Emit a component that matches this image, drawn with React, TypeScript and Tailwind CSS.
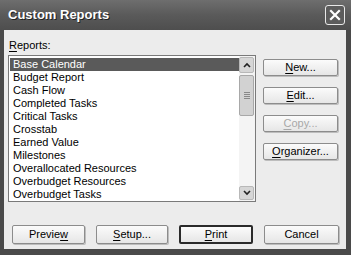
import React from 'react';

const reports = [
  'Base Calendar',
  'Budget Report',
  'Cash Flow',
  'Completed Tasks',
  'Critical Tasks',
  'Crosstab',
  'Earned Value',
  'Milestones',
  'Overallocated Resources',
  'Overbudget Resources',
  'Overbudget Tasks',
];

const Btn: React.FC<{ w: string; def?: boolean; disabled?: boolean; children: React.ReactNode }> = ({ w, def, disabled, children }) => (
  <div
    className={`${w} flex items-center justify-center rounded-[2px] bg-gradient-to-b from-[#fbfbfb] to-[#e6e6e6] text-[11px] ${
      def ? 'border-2 border-[#2a2a2a]' : 'border border-[#8c8c8c] shadow-[1px_1px_0_#bdbdbd]'
    } ${disabled ? 'text-[#a8a8a8]' : 'text-black'}`}
  >
    {children}
  </div>
);

const U: React.FC<{ children: React.ReactNode }> = ({ children }) => <span className="underline underline-offset-2">{children}</span>;

export default function App() {
  return (
    <div className="w-[351px] h-[255px] bg-[#4a4a4a] flex flex-col font-['Liberation_Sans',Arial,sans-serif] overflow-hidden">
      <div className="h-[30px] flex items-center justify-between bg-gradient-to-b from-[#6e6e6e] via-[#5a5a5a] to-[#4e4e4e] pl-[8px] pr-[6px]">
        <span className="text-white text-[13px] font-bold [text-shadow:1px_1px_0_#222]">Custom Reports</span>
        <div className="w-[20px] h-[20px] rounded-[3px] border border-[#e8e8e8] bg-[#5c5c5c] flex items-center justify-center">
          <svg width="12" height="12" viewBox="0 0 12 12">
            <path d="M2 2 L10 10 M10 2 L2 10" stroke="#fff" strokeWidth="2.2" strokeLinecap="square" />
          </svg>
        </div>
      </div>
      <div className="flex-1 ml-[4px] mr-[5px] mb-[6px] bg-[#ececec] flex flex-col pl-[4px] pt-[7px]">
        <div className="h-[18px] text-[11px] text-black pl-[1px]">
          <U>R</U>eports:
        </div>
        <div className="flex">
          <div className="w-[248px] h-[147px] border border-[#7a7a7a] bg-white flex overflow-hidden">
            <div className="flex-1 pt-[2px] pl-[1px] text-[11px] leading-[13px] text-black overflow-hidden">
              {reports.map((r, i) => (
                <div key={r} className={`pl-[3px] h-[13px] ${i === 0 ? 'bg-[#5a5a5a] text-white' : ''}`}>
                  {r}
                </div>
              ))}
            </div>
            <div className="w-[16px] bg-[#f4f4f4] flex flex-col py-[1px] pr-[1px]">
              <div className="h-[16px] rounded-[2px] border border-[#b8b8b8] bg-[#d6d6d6] flex items-center justify-center">
                <svg width="8" height="6" viewBox="0 0 8 6"><path d="M1 5 L4 2 L7 5" stroke="#222" strokeWidth="1.6" fill="none" /></svg>
              </div>
              <div className="mt-[2px] h-[41px] rounded-[2px] border border-[#a8a8a8] bg-[#d2d2d2] flex flex-col items-center justify-center gap-[1px]">
                <div className="w-[6px] h-[1px] bg-[#888]" />
                <div className="w-[6px] h-[1px] bg-[#888]" />
                <div className="w-[6px] h-[1px] bg-[#888]" />
                <div className="w-[6px] h-[1px] bg-[#888]" />
              </div>
              <div className="flex-1" />
              <div className="h-[14px] rounded-[2px] border border-[#b8b8b8] bg-[#d6d6d6] flex items-center justify-center">
                <svg width="8" height="6" viewBox="0 0 8 6"><path d="M1 1 L4 4 L7 1" stroke="#222" strokeWidth="1.6" fill="none" /></svg>
              </div>
            </div>
          </div>
          <div className="ml-[7px] mt-[4px] flex flex-col gap-[11px]">
            <div className="h-[17px] flex"><Btn w="w-[75px]"><U>N</U>ew...</Btn></div>
            <div className="h-[17px] flex"><Btn w="w-[75px]"><U>E</U>dit...</Btn></div>
            <div className="h-[17px] flex"><Btn w="w-[75px]" disabled><U>C</U>opy...</Btn></div>
            <div className="h-[17px] flex"><Btn w="w-[75px]"><U>O</U>rganizer...</Btn></div>
          </div>
        </div>
        <div className="mt-[23px] h-[19px] flex pl-[4px] gap-[11px]">
          <Btn w="w-[73px]">Previe<U>w</U></Btn>
          <Btn w="w-[72px]"><U>S</U>etup...</Btn>
          <Btn w="w-[74px]" def><U>P</U>rint</Btn>
          <Btn w="w-[75px]">Cancel</Btn>
        </div>
      </div>
    </div>
  );
}
